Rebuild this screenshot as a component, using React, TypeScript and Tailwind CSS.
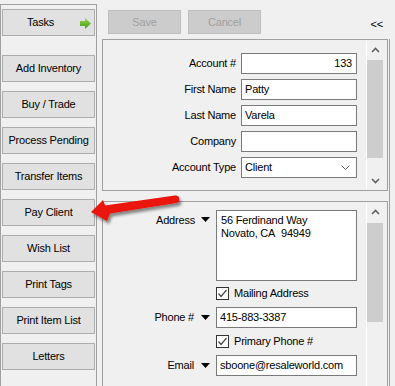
import React from 'react';

const menuItems = [
  'Add Inventory',
  'Buy / Trade',
  'Process Pending',
  'Transfer Items',
  'Pay Client',
  'Wish List',
  'Print Tags',
  'Print Item List',
  'Letters',
];

const Chevron: React.FC<{ up?: boolean }> = ({ up }) => (
  <svg width="9" height="6" viewBox="0 0 9 6">
    <polyline
      points={up ? '1,5 4.5,1.5 8,5' : '1,1 4.5,4.5 8,1'}
      fill="none"
      stroke="#606060"
      strokeWidth="1.6"
    />
  </svg>
);

const ScrollBar: React.FC<{ thumbTop: number; thumbHeight: number; down?: boolean }> = ({
  thumbTop,
  thumbHeight,
  down,
}) => (
  <div className="mt-[1px] mb-[1px] mr-[3px] w-[18px] shrink-0 border-l border-white flex flex-col">
    <div className="h-[17px] flex items-center justify-center">
      <Chevron up />
    </div>
    <div className="flex-1 relative">
      <div
        className="absolute left-0 w-[16px] bg-[#cdcdcd]"
        style={{ top: thumbTop, height: thumbHeight }}
      />
    </div>
    {down && (
      <div className="h-[17px] flex items-center justify-center">
        <Chevron />
      </div>
    )}
  </div>
);

const DropArrow = () => (
  <svg width="9" height="5" viewBox="0 0 9 5">
    <polygon points="0,0 9,0 4.5,5" fill="#000" />
  </svg>
);

const CheckBox: React.FC<{ label: string }> = ({ label }) => (
  <div className="flex items-center h-[13px] gap-[5px]">
    <div className="w-[13px] h-[13px] border border-[#333] bg-white flex items-center justify-center">
      <svg width="11" height="11" viewBox="0 0 11 11">
        <polyline points="1.5,5.5 4,8.5 9.5,2" fill="none" stroke="#444" strokeWidth="1.2" />
      </svg>
    </div>
    <span className="leading-[13px]">{label}</span>
  </div>
);

const TopRow: React.FC<{ label: string; children: React.ReactNode }> = ({ label, children }) => (
  <div className="flex items-center h-[21px]">
    <div className="w-[134px] text-right pr-[1px]">{label}</div>
    <div className="ml-[4px]">{children}</div>
  </div>
);

const input = 'h-[21px] border border-[#7a7a7a] bg-white px-[3px] flex items-center';

export default function App() {
  return (
    <div className="relative w-[395px] h-[386px] overflow-hidden bg-[#f0f0f0] text-[11px] tracking-[-0.2px] text-black font-['Liberation_Sans',Arial,sans-serif] flex">
      {/* task menu */}
      <div className="mt-[4px] w-[97px] h-[400px] shrink-0 border-t border-l border-r border-[#a0a0a0] pl-[1px] pt-[4px] flex flex-col">
        <div className="w-[93px] h-[27px] shrink-0 border border-[#adadad] bg-[#e1e1e1] flex items-center relative">
          <span className="flex-1 text-center pr-[16px]">Tasks</span>
          <svg className="absolute left-[77px] top-[8px]" width="12" height="11" viewBox="0 0 12 11">
            <defs>
              <linearGradient id="g" x1="0" y1="0" x2="0" y2="1">
                <stop offset="0" stopColor="#9ad84f" />
                <stop offset="1" stopColor="#3f9a16" />
              </linearGradient>
            </defs>
            <polygon points="0,3 5,3 5,0 11,5.5 5,11 5,8 0,8" fill="url(#g)" />
          </svg>
        </div>
        <div className="mt-[19px] flex flex-col gap-[9px]">
          {menuItems.map((item) => (
            <div
              key={item}
              className="w-[93px] h-[27px] shrink-0 border border-[#adadad] bg-[#e1e1e1] flex items-center justify-center"
            >
              {item}
            </div>
          ))}
        </div>
      </div>

      {/* client detail */}
      <div className="ml-[5px] w-[286px] shrink-0 flex flex-col">
        <div className="h-[39px] shrink-0 pt-[10px] pl-[6px] flex items-start">
          <div className="w-[73px] h-[24px] border border-[#bfbfbf] bg-[#cccccc] text-[#a0a0a0] flex items-center justify-center">
            Save
          </div>
          <div className="ml-[7px] w-[73px] h-[24px] border border-[#bfbfbf] bg-[#cccccc] text-[#a0a0a0] flex items-center justify-center">
            Cancel
          </div>
          <div className="ml-auto mr-[5px] mt-[6px]">&lt;&lt;</div>
        </div>

        <div className="h-[152px] shrink-0 border border-[#a0a0a0] flex">
          <div className="flex-1 pt-[13px] flex flex-col gap-[5px]">
            <TopRow label="Account #">
              <div className={`${input} w-[116px] justify-end pr-[4px]`}>133</div>
            </TopRow>
            <TopRow label="First Name">
              <div className={`${input} w-[116px]`}>Patty</div>
            </TopRow>
            <TopRow label="Last Name">
              <div className={`${input} w-[116px]`}>Varela</div>
            </TopRow>
            <TopRow label="Company">
              <div className={`${input} w-[116px]`} />
            </TopRow>
            <TopRow label="Account Type">
              <div className={`${input} w-[116px] justify-between pr-[6px]`}>
                <span>Client</span>
                <svg width="9" height="5" viewBox="0 0 9 5">
                  <polyline points="0.5,0.5 4.5,4.5 8.5,0.5" fill="none" stroke="#606060" strokeWidth="1" />
                </svg>
              </div>
            </TopRow>
          </div>
          <ScrollBar thumbTop={2} thumbHeight={98} down />
        </div>

        <div className="mt-[10px] h-[200px] shrink-0 border border-[#a0a0a0] flex">
          <div className="flex-1 pt-[8px] flex flex-col">
            <div className="flex items-start">
              <div className="w-[92px] text-right pt-[3px] leading-[14px]">Address</div>
              <div className="w-[21px] pt-[7px] flex justify-center">
                <DropArrow />
              </div>
              <div className="w-[141px] h-[71px] border border-[#7a7a7a] bg-white px-[4px] pt-[3px] leading-[13px]">
                <div>56 Ferdinand Way</div>
                <div>Novato, CA&nbsp;&nbsp;94949</div>
              </div>
            </div>
            <div className="mt-[6px] ml-[113px]">
              <CheckBox label="Mailing Address" />
            </div>
            <div className="mt-[7px] flex items-center h-[21px]">
              <div className="w-[91px] text-right">Phone #</div>
              <div className="w-[22px] flex justify-center">
                <DropArrow />
              </div>
              <div className={`${input} w-[141px]`}>415-883-3387</div>
            </div>
            <div className="mt-[7px] ml-[113px]">
              <CheckBox label="Primary Phone #" />
            </div>
            <div className="mt-[7px] flex items-center h-[21px]">
              <div className="w-[91px] text-right">Email</div>
              <div className="w-[22px] flex justify-center">
                <DropArrow />
              </div>
              <div className={`${input} w-[141px]`}>sboone@resaleworld.com</div>
            </div>
          </div>
          <ScrollBar thumbTop={3} thumbHeight={99} />
        </div>
      </div>

      <div className="ml-[1px] mt-[39px] w-[1px] h-[360px] shrink-0 bg-[#a0a0a0]" />

      {/* callout arrow */}
      <svg className="absolute left-0 top-0 pointer-events-none" width="395" height="386" viewBox="0 0 395 386">
        <defs>
          <filter id="sh" x="-20%" y="-50%" width="140%" height="200%">
            <feDropShadow dx="2" dy="3" stdDeviation="1.6" floodColor="#000" floodOpacity="0.45" />
          </filter>
        </defs>
        <path
          d="M91 212 L103 200 L105 205.5 L175 195.5 A3.8 3.8 0 0 1 176.2 203 L110 213.5 L107 221 Z"
          fill="#ea1209"
          filter="url(#sh)"
        />
      </svg>
    </div>
  );
}
